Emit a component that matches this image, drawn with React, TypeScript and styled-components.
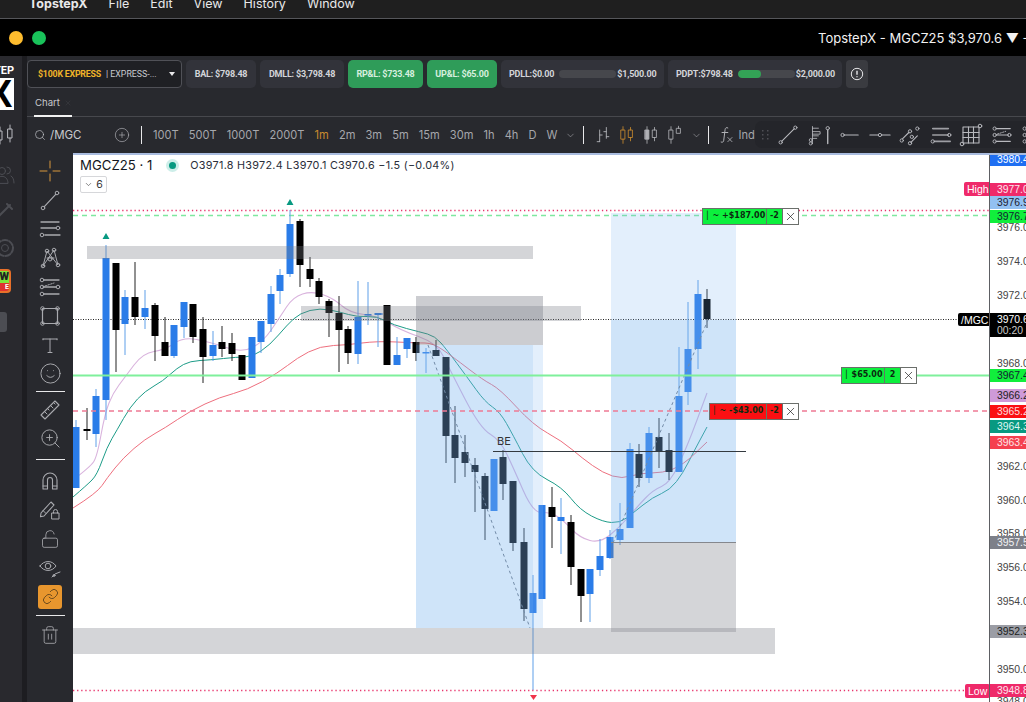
import React from "react";
import styled, { createGlobalStyle } from "styled-components";
import { Search, CirclePlus, LockOpen, Link, Trash2, Smile, ZoomIn, ChevronDown, X as CloseIcon } from "lucide-react";

const GlobalStyle = createGlobalStyle`
  html, body { margin: 0; padding: 0; background: #000; }
  * { box-sizing: border-box; }
  body { font-family: "Inter", "Liberation Sans", sans-serif; }
`;

const Page = styled.div`
  width: 1026px;
  height: 702px;
  display: flex;
  flex-direction: column;
  overflow: hidden;
  background: #28292e;
`;

const MenuBar = styled.div`
  height: 19px;
  flex-shrink: 0;
  display: flex;
  align-items: flex-end;
  gap: 21px;
  padding: 0 0 8px 29px;
  background: #1f1f1f;
  border-bottom: 1px solid #55565a;
  overflow: hidden;
`;

const MenuItem = styled.span<{ $bold?: boolean }>`
  font-size: 12.5px;
  line-height: 13px;
  color: #e9e9ea;
  font-weight: ${(p) => (p.$bold ? 700 : 400)};
`;

const TitleBar = styled.div`
  height: 37px;
  flex-shrink: 0;
  display: flex;
  align-items: center;
  padding-left: 9px;
  gap: 9px;
  background: #000;
`;

const WindowDot = styled.span<{ $color: string }>`
  width: 14px;
  height: 14px;
  flex-shrink: 0;
  border-radius: 50%;
  background: ${(p) => p.$color};
`;

const WindowTitle = styled.span`
  margin-left: 763px;
  flex-shrink: 0;
  white-space: nowrap;
  font-size: 13px;
  color: #f2f2f2;
`;

const Workspace = styled.div`
  flex: 1;
  display: flex;
  min-height: 0;
`;

const LogoRail = styled.div`
  width: 22px;
  flex-shrink: 0;
  display: flex;
  flex-direction: column;
  padding-top: 9px;
  background: #29292e;
  overflow: hidden;
`;

const LogoStep = styled.div`
  width: 14px;
  height: 12px;
  display: flex;
  justify-content: flex-end;
  font: 700 11px/12px "Roboto", sans-serif;
  color: #fff;
  white-space: nowrap;
`;

const LogoBox = styled.div`
  width: 14px;
  height: 32px;
  margin-top: 1px;
  background: #fff;
  overflow: hidden;
  font: 900 38px/32px "Liberation Sans", sans-serif;
  color: #000;
  text-indent: -13px;
`;

const RailIcon = styled.div<{ $gap: number }>`
  margin: ${(p) => p.$gap}px 0 0 -7px;
  width: 24px;
  height: 24px;
  color: #4c4d53;
`;

const LiveBadge = styled.div`
  margin-top: 9px;
  width: 11px;
  height: 24px;
  display: flex;
  flex-direction: column;
  justify-content: flex-end;
  align-items: flex-end;
  background: #7fe53b;
  border: 2px solid #e8702a;
  border-left: none;
  border-radius: 0 4px 4px 0;
  overflow: hidden;
  position: relative;
  font: 900 11px/12px "Roboto", sans-serif;
  color: #222;
`;

const LiveStrip = styled.span`
  display: block;
  width: 11px;
  height: 8px;
  background: #e0322e;
  font: 700 7px/8px "Roboto", sans-serif;
  color: #fff;
  text-align: right;
`;

const GrayStub = styled.div`
  margin-top: 19px;
  width: 7px;
  height: 20px;
  background: #4c4d53;
  border-radius: 0 3px 3px 0;
`;

const RailGutter = styled.div`
  width: 5px;
  flex-shrink: 0;
  background: #1d1d21;
`;

const Main = styled.div`
  flex: 1;
  min-width: 0;
  display: flex;
  flex-direction: column;
`;

const AccountBar = styled.div`
  height: 36px;
  flex-shrink: 0;
  display: flex;
  gap: 4px;
  padding: 4px 0 4px 0;
`;

const AccountSelect = styled.div`
  width: 155px;
  display: flex;
  align-items: center;
  padding-left: 10px;
  border: 1px solid #505157;
  border-radius: 4px;
  background: #1f2024;
  font: 700 8.8px "Roboto", sans-serif;
  letter-spacing: -0.2px;
  color: #f0b429;
  white-space: nowrap;
`;

const AccountSub = styled.span`
  margin-left: 5px;
  font-weight: 400;
  letter-spacing: 0;
  color: #c9cacf;
`;

const Caret = styled.span`
  margin-left: 12px;
  width: 0;
  height: 0;
  border-left: 3.5px solid transparent;
  border-right: 3.5px solid transparent;
  border-top: 4px solid #e8e8ea;
`;

const StatPill = styled.div<{ $width: number; $green?: boolean; $limit?: boolean }>`
  width: ${(p) => p.$width}px;
  display: flex;
  align-items: center;
  justify-content: ${(p) => (p.$limit ? "flex-start" : "center")};
  padding-left: ${(p) => (p.$limit ? 8 : 0)}px;
  gap: 5px;
  border-radius: 5px;
  background: ${(p) => (p.$green ? "#2f9c59" : "#32333a")};
  font: 700 9px "Roboto", sans-serif;
  letter-spacing: -0.2px;
  color: ${(p) => (p.$green ? "#d6efdf" : "#d4d5d9")};
  white-space: nowrap;
`;

const LimitTrack = styled.div`
  width: 57px;
  height: 8px;
  margin-right: -4px;
  flex-shrink: 0;
  border-radius: 4px;
  background: #46474c;
  overflow: hidden;
`;

const LimitFill = styled.div<{ $percent: number }>`
  width: ${(p) => p.$percent}%;
  height: 100%;
  border-radius: 4px;
  background: #33a356;
`;

const AlertButton = styled.div`
  width: 22px;
  display: flex;
  align-items: center;
  justify-content: center;
  border-radius: 4px;
  background: #3a3b40;
  color: #e6e6e8;
`;

const TabRow = styled.div`
  height: 25px;
  flex-shrink: 0;
  display: flex;
  padding-left: 7px;
  border-bottom: 1px solid #47484d;
`;

const ChartTab = styled.div`
  width: 38px;
  height: 25px;
  display: flex;
  align-items: center;
  padding: 0 0 2px 1px;
  gap: 4px;
  border-bottom: 2px solid #f2f2f2;
  font-size: 9.6px;
  color: #c8c9cd;
  white-space: nowrap;
  overflow: visible;
`;

const TabClose = styled.span`
  color: #4c4d53;
  display: flex;
`;

const ChartToolbar = styled.div`
  height: 36px;
  flex-shrink: 0;
  position: relative;
  display: flex;
  align-items: center;
  padding-left: 7px;
  font-size: 11.1px;
  color: #a6a7ac;
  white-space: nowrap;
`;

const SymbolSearch = styled.div`
  width: 80px;
  display: flex;
  align-items: center;
  gap: 4px;
  color: #c8c9cd;
  font-size: 11.5px;
`;

const Divider = styled.span<{ $left: number; $right: number }>`
  width: 1px;
  height: 18px;
  background: #e8e8ea;
  margin: 0 ${(p) => p.$right}px 0 ${(p) => p.$left}px;
  flex-shrink: 0;
`;

const Intervals = styled.div`
  display: flex;
  gap: 10.1px;
`;

const Interval = styled.span<{ $active?: boolean }>`
  color: ${(p) => (p.$active ? "#c98a2e" : "#a6a7ac")};
`;

const IconSlot = styled.span<{ $width: number; $color?: string }>`
  width: ${(p) => p.$width}px;
  display: flex;
  justify-content: center;
  align-items: center;
  color: ${(p) => p.$color || "#b0b1b6"};
  flex-shrink: 0;
`;

const DrawingPanel = styled.div`
  position: absolute;
  top: 4px;
  right: 0;
  width: 271px;
  height: 27px;
  display: flex;
  align-items: center;
  padding-left: 2px;
  overflow: hidden;
  background: #24252a;
  border-radius: 7px 0 0 7px;
`;

const PanelTool = styled.span`
  width: 30.5px;
  flex-shrink: 0;
  display: flex;
  justify-content: center;
  color: #b8b9be;
`;

const ChartArea = styled.div`
  flex: 1;
  min-height: 0;
  display: flex;
`;

const ToolRail = styled.div`
  width: 46px;
  flex-shrink: 0;
  display: flex;
  flex-direction: column;
  align-items: center;
  padding-top: 3px;
`;

const ToolSlot = styled.div<{ $active?: boolean }>`
  width: 24px;
  height: ${(p) => (p.$active ? 24 : 29)}px;
  margin: ${(p) => (p.$active ? "2.5px 0" : "0")};
  display: flex;
  align-items: center;
  justify-content: center;
  border-radius: 3px;
  background: ${(p) => (p.$active ? "#e8962e" : "transparent")};
  color: ${(p) => (p.$active ? "#3a2c16" : "#a9aaaf")};
`;

const RailRule = styled.div<{ $space: number }>`
  width: 29px;
  height: 1px;
  margin: ${(p) => p.$space}px 0;
  background: #e8e8ea;
`;

const Chart = styled.div`
  flex: 1;
  min-width: 0;
  display: flex;
  background: #fff;
  border-top: 2px solid #a9bcdf;
`;

const Canvas = styled.div`
  position: relative;
  width: 916px;
  flex-shrink: 0;
  overflow: visible;
`;

const CandleSvg = styled.svg`
  display: block;
  width: 916px;
  height: 547px;
`;

const Legend = styled.div`
  position: absolute;
  left: 7px;
  top: 2px;
  display: flex;
  align-items: center;
  color: #131722;
`;

const LegendTitle = styled.span`
  font-size: 13.2px;
  line-height: 16px;
`;

const StatusDot = styled.span`
  width: 13px;
  height: 13px;
  margin: 0 11px 0 14px;
  border-radius: 50%;
  background: #cdeee9;
  display: flex;
  align-items: center;
  justify-content: center;
  &::after {
    content: "";
    width: 7px;
    height: 7px;
    border-radius: 50%;
    background: #089981;
  }
`;

const LegendValues = styled.span`
  font-size: 10.8px;
  letter-spacing: 0.28px;
  white-space: nowrap;
  color: #2a2e39;
`;

const CollapseButton = styled.div`
  position: absolute;
  left: 7px;
  top: 21px;
  width: 27px;
  height: 17px;
  display: flex;
  align-items: center;
  justify-content: center;
  gap: 3px;
  border: 1px solid #d6d7da;
  border-radius: 2px;
  font-size: 10.5px;
  color: #333;
`;

const ChartNote = styled.span`
  position: absolute;
  left: 424px;
  top: 279px;
  font-size: 11px;
  color: #333;
`;

const OrderTag = styled.div<{ $x: number; $y: number; $width: number; $bg: string }>`
  position: absolute;
  left: ${(p) => p.$x}px;
  top: ${(p) => p.$y}px;
  width: ${(p) => p.$width}px;
  height: 17px;
  display: flex;
  align-items: stretch;
  background: ${(p) => p.$bg};
  border: 1.5px solid #6b6f6b;
  font: 700 8px/14px "DejaVu Sans", sans-serif;
  color: #0b2b10;
  white-space: nowrap;
`;

const TagAmount = styled.span`
  flex: 1;
  padding-left: 2px;
`;

const TagQty = styled.span`
  width: 16px;
  text-align: center;
  border-left: 1px solid #5f7a62;
`;

const TagClose = styled.span`
  width: 16px;
  display: flex;
  align-items: center;
  justify-content: center;
  background: #fff;
  color: #222;
  border-left: 1px solid #6b6f6b;
`;

const SideTag = styled.span<{ $y: number; $bg: string; $x: number; $h?: number }>`
  position: absolute;
  left: ${(p) => p.$x}px;
  top: ${(p) => p.$y}px;
  height: ${(p) => p.$h || 13}px;
  padding: 0 3px;
  display: flex;
  align-items: center;
  border-radius: 2px;
  background: ${(p) => p.$bg};
  font: 10.5px "Liberation Sans", sans-serif;
  color: #fff;
`;

const PriceAxis = styled.div`
  position: relative;
  flex: 1;
  border-left: 1px solid #5d5f63;
  background: #fff;
  overflow: hidden;
`;

const PriceLabel = styled.div<{ $y: number; $bg?: string; $fg?: string; $h?: number }>`
  position: absolute;
  left: 0;
  right: 0;
  top: ${(p) => p.$y}px;
  height: ${(p) => p.$h || 13}px;
  padding-left: 7px;
  background: ${(p) => p.$bg || "transparent"};
  color: ${(p) => p.$fg || "#444"};
  font: 10.4px/${(p) => p.$h || 13}px "Liberation Sans", sans-serif;
  white-space: nowrap;
`;

// x, body top, body bottom, wick top, wick bottom, colour
type Candle = [number, number, number, number, number, "b" | "k"];

const candles: Candle[] = [
  [76, 427, 488, 420, 488, "b"], [87, 429, 431, 408, 440, "k"], [96, 396, 434, 389, 447, "b"],
  [106, 258, 400, 245, 420, "b"], [116, 263, 330, 263, 372, "k"], [125, 297, 324, 290, 355, "b"],
  [135, 297, 317, 262, 325, "k"], [145, 308, 317, 290, 329, "b"], [155, 305, 336, 303, 361, "k"],
  [165, 342, 356, 317, 356, "k"], [174, 325, 356, 325, 358, "b"], [184, 302, 327, 302, 338, "b"],
  [193, 304, 337, 304, 343, "k"], [203, 329, 357, 317, 383, "k"], [213, 345, 356, 331, 361, "b"],
  [222, 342, 349, 326, 357, "k"], [232, 343, 354, 333, 361, "k"], [242, 355, 380, 355, 380, "k"],
  [252, 337, 378, 337, 378, "b"], [261, 321, 342, 321, 353, "b"], [271, 294, 324, 286, 332, "b"],
  [280, 275, 291, 269, 304, "b"], [290, 224, 274, 210, 277, "b"], [300, 221, 265, 219, 287, "k"],
  [310, 269, 279, 257, 287, "k"], [319, 281, 297, 278, 304, "k"], [329, 301, 313, 299, 337, "k"],
  [339, 313, 330, 296, 372, "k"], [348, 329, 353, 326, 364, "k"], [358, 317, 354, 281, 364, "b"],
  [368, 314, 315, 282, 325, "b"], [378, 313, 315, 313, 347, "b"], [387, 305, 365, 305, 365, "k"],
  [397, 355, 365, 337, 365, "b"], [407, 338, 349, 338, 358, "b"], [416, 342, 353, 337, 361, "k"],
  [426, 352, 353, 348, 373, "b"], [436, 350, 356, 340, 356, "k"], [446, 357, 436, 357, 463, "k"],
  [455, 435, 458, 406, 483, "k"], [465, 452, 463, 435, 477, "k"], [475, 465, 472, 458, 512, "k"],
  [485, 476, 509, 473, 540, "k"], [494, 459, 511, 459, 511, "b"], [503, 457, 484, 450, 500, "k"],
  [513, 481, 543, 481, 551, "k"], [524, 542, 609, 528, 621, "k"], [533, 593, 613, 575, 690, "b"],
  [542, 505, 599, 505, 599, "b"], [552, 507, 517, 487, 548, "k"], [561, 517, 521, 498, 554, "b"],
  [571, 522, 567, 515, 585, "k"], [581, 569, 596, 569, 622, "k"], [590, 569, 594, 569, 622, "b"],
  [600, 556, 570, 539, 576, "b"], [610, 537, 558, 530, 559, "b"], [620, 529, 540, 503, 545, "b"],
  [630, 449, 528, 443, 528, "b"], [639, 454, 478, 444, 487, "k"], [649, 433, 478, 427, 483, "b"],
  [659, 437, 451, 418, 468, "k"], [669, 450, 472, 433, 480, "k"], [679, 396, 472, 347, 472, "b"],
  [688, 349, 392, 302, 405, "b"], [698, 294, 349, 280, 369, "b"], [707, 299, 319, 289, 328, "k"],
];

type Point = [number, number];

const tealLine: Point[] = [[73, 497], [87, 485], [97, 475], [107, 447], [117, 430], [130, 407], [145, 391], [163, 381], [177, 368], [190, 361], [210, 360], [237, 357], [252, 357], [270, 345], [287, 325], [300, 313], [320, 308], [340, 312], [357, 317], [377, 316], [393, 325], [420, 332], [435, 336], [447, 350], [467, 377], [485, 402], [500, 412], [513, 435], [532, 472], [562, 487], [580, 510], [603, 522], [620, 523], [633, 513], [653, 497], [670, 490], [683, 473], [693, 453], [707, 427]];
const redLine: Point[] = [[73, 508], [97, 493], [107, 478], [123, 458], [145, 439], [165, 428], [190, 411], [220, 397], [247, 390], [278, 373], [297, 358], [320, 346], [347, 345], [377, 341], [417, 343], [433, 343], [453, 357], [483, 380], [500, 389], [533, 425], [562, 441], [582, 458], [603, 473], [622, 479], [640, 473], [663, 473], [683, 465], [707, 442]];
const purpleLine: Point[] = [[73, 480], [90, 467], [97, 457], [105, 413], [113, 393], [125, 377], [143, 353], [165, 350], [183, 337], [210, 342], [242, 353], [263, 342], [280, 317], [293, 297], [312, 291], [333, 298], [350, 313], [378, 316], [400, 330], [437, 343], [450, 370], [480, 428], [500, 440], [513, 467], [533, 513], [550, 512], [563, 520], [580, 538], [600, 543], [620, 527], [637, 507], [653, 490], [670, 483], [687, 447], [707, 393]];

// round the corners of a moving average a little
const smoothPath = (points: Point[]) => {
  let d = `M${points[0][0]} ${points[0][1]}`;
  for (let i = 1; i < points.length - 1; i++) {
    const [x, y] = points[i];
    const [nx, ny] = points[i + 1];
    d += `Q${x} ${y} ${(x + nx) / 2} ${(y + ny) / 2}`;
  }
  const last = points[points.length - 1];
  return `${d}L${last[0]} ${last[1]}`;
};

const axisLabels: { y: number; text: string; bg?: string; fg?: string }[] = [
  { y: -2, text: "3980.4", bg: "#1f6ff2", fg: "#fff" },
  { y: 66, text: "3976.0" }, { y: 99.5, text: "3974.0" }, { y: 134, text: "3972.0" },
  { y: 202, text: "3968.0" }, { y: 304.5, text: "3962.0" }, { y: 338.5, text: "3960.0" },
  { y: 371.5, text: "3958.0" }, { y: 405.5, text: "3956.0" }, { y: 440, text: "3954.0" },
  { y: 507.5, text: "3950.0" }, { y: 540, text: "3948.0" },
  { y: 27.5, text: "3977.0", bg: "#ef2a6a", fg: "#fde3ec" },
  { y: 41, text: "3976.9", bg: "#92c0f2", fg: "#223" },
  { y: 54.5, text: "3976.7", bg: "#11ee3c", fg: "#123" },
  { y: 213.5, text: "3967.4", bg: "#11ee3c", fg: "#123" },
  { y: 234, text: "3966.2", bg: "#cf9ad8", fg: "#222" },
  { y: 249.5, text: "3965.2", bg: "#fb0f12", fg: "#fbdcdc" },
  { y: 265, text: "3964.3", bg: "#089981", fg: "#dff5f1" },
  { y: 280.5, text: "3963.4", bg: "#f5404f", fg: "#fde3e5" },
  { y: 381, text: "3957.5", bg: "#7d8089", fg: "#f2f2f4" },
  { y: 470, text: "3952.3", bg: "#9b9da5", fg: "#1c1d20" },
  { y: 529, text: "3948.8", bg: "#ef2a6a", fg: "#fde3ec" },
];

const intervals = ["100T", "500T", "1000T", "2000T", "1m", "2m", "3m", "5m", "15m", "30m", "1h", "4h", "D", "W"];

const Dot = ({ x, y, r = 1.8 }: { x: number; y: number; r?: number }) => (
  <circle cx={x} cy={y} r={r} fill="none" stroke="currentColor" />
);

const Icon = ({ size = 24, w = 24, children }: { size?: number; w?: number; children: React.ReactNode }) => (
  <svg width={size * (w / 24)} height={size} viewBox={`0 0 ${w} 24`} fill="none" stroke="currentColor" strokeWidth="1" strokeLinecap="round" strokeLinejoin="round">
    {children}
  </svg>
);

const CrosshairIcon = () => (
  <Icon><path d="M12 2v7M12 15v7M2 12h7M15 12h7" stroke="#d8983c" /></Icon>
);
const TrendIcon = () => (
  <Icon><Dot x={5} y={20} /><Dot x={19} y={5} /><path d="M6.3 18.7 17.7 6.3" strokeWidth="1.2" /></Icon>
);
const ChannelIcon = () => (
  <Icon><path d="M3 5h18M3 11h15M7 18h15" strokeWidth="1.3" /><Dot x={20} y={11} /><Dot x={4} y={18} /></Icon>
);
const PatternIcon = () => (
  <Icon>
    <path d="M5 20 9 5 20 19 16 4 5 20M9 12h7" />
    <Dot x={5} y={20} /><Dot x={9} y={5} /><Dot x={20} y={19} /><Dot x={16} y={4} /><Dot x={12} y={13} r={2} />
  </Icon>
);
const FibIcon = () => (
  <Icon>
    <path d="M6 5h15M5 12h13M6 19h15" strokeWidth="1.3" /><path d="M7 11l9-3" strokeDasharray="1.5 1.5" />
    <Dot x={4} y={5} /><Dot x={4} y={12} /><Dot x={20} y={12} /><Dot x={4} y={19} />
  </Icon>
);
const RectIcon = () => (
  <Icon><rect x="4.5" y="4.5" width="15" height="15" strokeWidth="1.2" /><Dot x={4.5} y={4.5} /><Dot x={19.5} y={4.5} /><Dot x={4.5} y={19.5} /><Dot x={19.5} y={19.5} /></Icon>
);
const TextIcon = () => (
  <Icon><path d="M5 6h14M12 6v13M10 19.5h4" /><path d="M5 6v.8M19 6v.8" /></Icon>
);
const RulerIcon = () => (
  <Icon>
    <path d="M3 17 17 3l4 4L7 21z" strokeWidth="1.1" />
    <path d="M6.5 13.5 9 16M9.5 10.5l1.6 1.6M12.5 7.5 15 10M15.5 4.5l1.6 1.6" />
  </Icon>
);
const MagnetIcon = () => (
  <Icon>
    <path d="M5 20V11a7 7 0 0 1 14 0v9h-4.500v-9a2.500 2.500 0 0 0-5 0v9z" strokeWidth="1.100" />
    <path d="M5 17h4.500M14.500 17H19" />
  </Icon>
);
const PencilLockIcon = () => (
  <Icon>
    <path d="M3 15 13 4l3 3L6 18l-3.5.8z" strokeWidth="1.1" />
    <path d="M5 12.5 8 15.500" />
    <rect x="14" y="15" width="7" height="6" /><path d="M15.500 15v-1.500a2 2 0 0 1 4 0V15" />
  </Icon>
);
const EyeBrushIcon = () => (
  <Icon>
    <path d="M2 10c4-6 12-6 16 0-4 6-12 6-16 0z" /><circle cx="10" cy="10" r="2.800" />
    <path d="M14 21l3-3 5-2" /><Dot x={16} y={19.500} r={1} />
  </Icon>
);

const BarsIcon = () => (
  <Icon size={20}><path d="M8 6v14M5 20h3M8 12h3M16 3v13M13 8h3M16 14h3" strokeWidth="1.100" /></Icon>
);
const CandleIcon = ({ filled, hollow }: { filled?: boolean; hollow?: boolean }) => (
  <Icon size={20}>
    <rect x="5" y="6" width="4.500" height="11" fill={filled ? "currentColor" : "none"} />
    <path d="M7.200 2v4M7.200 17v5" />
    <rect x="14" y={hollow ? 4 : 6} width="4.500" height={hollow ? 6 : 9} />
    <path d={hollow ? "M16.200 1.500V4" : "M16.200 3v3M16.200 15v4"} />
  </Icon>
);
const FxIcon = () => (
  <Icon size={20}>
    <path d="M13 3.500c-2-1-3 0-3.300 2L8 19c-.3 1.500-1.500 2-3 1.500M6 9h7" strokeWidth="1.200" />
    <path d="M13 15l5 5M18 15l-5 5" />
  </Icon>
);

const PanelGrip = () => (
  <svg width="14" height="14" viewBox="0 0 14 14" fill="#4e4f55">
    {[2, 6, 10].map((y) => [4, 9].map((x) => <rect key={`${x}-${y}`} x={x} y={y} width="1.500" height="1.500" />))}
  </svg>
);

const panelTools = [
  <Icon size={22} key="line"><Dot x={4} y={20} /><Dot x={20} y={4} /><path d="M5.300 18.700 18.700 5.300" strokeWidth="1.200" /></Icon>,
  <Icon size={22} w={36} key="flag">
    <path d="M10 2v20M10 4h7M10 8h9v3h-9M10 13h7M10 16h5" /><Dot x={8} y={18} /><Dot x={8} y={22} />
    <Dot x={28} y={4} r={2} /><path d="M28 6v16" strokeWidth="1.600" />
  </Icon>,
  <Icon size={22} key="hray"><Dot x={5} y={12} /><path d="M7 12h15" strokeWidth="1.300" /></Icon>,
  <Icon size={22} key="hline"><Dot x={12} y={12} /><path d="M1 12h9M14 12h9" strokeWidth="1.300" /></Icon>,
  <Icon size={22} key="parallel">
    <path d="M4 16 11 9M13 20l7-7" strokeWidth="1.200" /><Dot x={3} y={18} /><Dot x={12} y={8} /><Dot x={12} y={21} /><Dot x={20} y={5} /><Dot x={14} y={14} />
  </Icon>,
  <Icon size={22} key="lines">
    <path d="M3 5h17M3 12h17M5 19h17" strokeWidth="1.800" stroke="#9d9ea3" /><Dot x={21} y={12} /><Dot x={3} y={19} />
  </Icon>,
  <Icon size={24} key="grid">
    <rect x="4" y="4" width="16" height="16" strokeWidth="1.100" /><path d="M4 9.500h16M4 14.500h16M9.500 4v16M14.500 4v16" strokeWidth="1.100" />
    <Dot x={21} y={3} /><Dot x={3} y={21} />
  </Icon>,
  <Icon size={22} key="fib">
    <path d="M6 5h15M6 12h13M6 19h15" strokeWidth="1.300" /><path d="M7 11l9-3" strokeDasharray="1.500 1.500" />
    <Dot x={4} y={5} /><Dot x={4} y={12} /><Dot x={20} y={12} /><Dot x={4} y={19} />
  </Icon>,
  <Icon size={22} key="more">
    <path d="M6 5h15M6 12h13M6 19h15" strokeWidth="1.300" /><Dot x={4} y={5} /><Dot x={4} y={12} /><Dot x={4} y={19} />
  </Icon>,
];

const toolGroups: React.ReactNode[] = [
  <CrosshairIcon />, <TrendIcon />, <ChannelIcon />, <PatternIcon />, <FibIcon />, <RectIcon />, <TextIcon />, <Smile size={23} strokeWidth={1} />,
];

const ChartDrawing = () => (
  <CandleSvg viewBox="73 155 916 547">
    <path d="M73 210.500H989" stroke="#e8336b" strokeWidth="1.300" strokeDasharray="1.300 2.800" />
    <path d="M73 215.500H989" stroke="#7fe8a0" strokeWidth="1.500" strokeDasharray="5 4" />
    <path d="M73 319.500H958" stroke="#222" strokeWidth="1" strokeDasharray="1 1.500" />

    <path d={smoothPath(purpleLine)} fill="none" stroke="#d9b3dd" strokeWidth="1.100" />
    <path d={smoothPath(tealLine)} fill="none" stroke="#1d9c88" strokeWidth="1" />
    <path d={smoothPath(redLine)} fill="none" stroke="#ee6f7e" strokeWidth="1" />

    {candles.map(([x, top, bottom, wTop, wBottom, color]) => {
      const fill = color === "b" ? "#2a7ce8" : "#000";
      return (
        <g key={x}>
          <path d={`M${x} ${wTop}V${wBottom}`} stroke={color === "b" ? "#5f9fe8" : "#222"} strokeWidth="1" />
          <rect x={x - 3.500} y={top} width="7" height={Math.max(bottom - top, 1.500)} fill={fill} />
        </g>
      );
    })}

    <path d="M428 345 530 628" stroke="#6f7680" strokeWidth="1" strokeDasharray="3 3" />
    <path d="M613 543 708 320" stroke="#6f7680" strokeWidth="1" strokeDasharray="3 3" />
    <path d="M375 314h8" stroke="#2a7ce8" strokeWidth="1" />

    <rect x="87" y="246" width="446" height="13" fill="#787b86" fillOpacity=".32" />
    <rect x="301" y="306" width="280" height="15" fill="#787b86" fillOpacity=".32" />
    <rect x="416" y="296" width="127" height="49" fill="#787b86" fillOpacity=".38" />
    <rect x="73" y="628" width="702" height="26" fill="#787b86" fillOpacity=".32" />

    <rect x="416" y="345" width="127" height="283" fill="#7cb2f0" fillOpacity=".21" />
    <rect x="416" y="345" width="117" height="283" fill="#7cb2f0" fillOpacity=".19" />
    <rect x="611" y="213" width="125" height="329" fill="#7cb2f0" fillOpacity=".21" />
    <rect x="611" y="320" width="125" height="222" fill="#7cb2f0" fillOpacity=".19" />
    <rect x="611" y="542" width="125" height="90" fill="#787b86" fillOpacity=".32" />
    <path d="M611 542.500h125" stroke="#85878d" strokeWidth="1" />

    <path d="M73 375.500H989" stroke="#7ff09b" strokeWidth="2" />
    <path d="M73 411H989" stroke="#ee7a94" strokeWidth="1.400" strokeDasharray="5 4" />
    <path d="M493 451.500h253" stroke="#333a40" strokeWidth="1.200" />
    <path d="M73 690.500H965" stroke="#e8336b" strokeWidth="1.300" strokeDasharray="1.300 2.800" />

    <path d="M106 233l3.500 6h-7zM290 199l3.500 6h-7z" fill="#089981" />
    <path d="M530 695h7l-3.500 5z" fill="#f0344a" />
  </CandleSvg>
);

const Tag = ({ x, y, width, bg, amount, qty }: { x: number; y: number; width: number; bg: string; amount: string; qty: string }) => (
  <OrderTag $x={x} $y={y} $width={width} $bg={bg}>
    <TagAmount>{amount}</TagAmount>
    <TagQty>{qty}</TagQty>
    <TagClose><CloseIcon size={13} strokeWidth={1.300} /></TagClose>
  </OrderTag>
);

export default function App() {
  return (
    <Page>
      <GlobalStyle />
      <MenuBar>
        <MenuItem $bold>TopstepX</MenuItem>
        <MenuItem>File</MenuItem>
        <MenuItem>Edit</MenuItem>
        <MenuItem>View</MenuItem>
        <MenuItem>History</MenuItem>
        <MenuItem>Window</MenuItem>
      </MenuBar>
      <TitleBar>
        <WindowDot $color="#febc2e" />
        <WindowDot $color="#19c25a" />
        <WindowTitle>TopstepX - MGCZ25 $3,970.6 ▼ -0.7</WindowTitle>
      </TitleBar>
      <Workspace>
        <LogoRail>
          <LogoStep>STEP</LogoStep>
          <LogoBox>X</LogoBox>
          <RailIcon $gap={13}>
            <Icon><rect x="5" y="8" width="4" height="9" stroke="#b9babf" /><path d="M7 4v4M7 17v4" stroke="#b9babf" /><rect x="15" y="6" width="4" height="9" stroke="#b9babf" /><path d="M17 2v4M17 15v4" stroke="#b9babf" /></Icon>
          </RailIcon>
          <RailIcon $gap={16}>
            <Icon><circle cx="9" cy="8" r="3.500" /><path d="M3 20c0-9 12-9 12 0zM14 4a3.500 3.500 0 0 1 0 7M18 13c2 1 3 4 3 7" /></Icon>
          </RailIcon>
          <RailIcon $gap={12}>
            <Icon><path d="M3 20 17 6M14 5l5 5" strokeWidth="2" /></Icon>
          </RailIcon>
          <RailIcon $gap={13}>
            <Icon><circle cx="12" cy="12" r="3.500" /><circle cx="12" cy="12" r="8" strokeDasharray="5 2" strokeWidth="2" /></Icon>
          </RailIcon>
          <LiveBadge>
            W
            <LiveStrip>E</LiveStrip>
          </LiveBadge>
          <GrayStub />
        </LogoRail>
        <RailGutter />
        <Main>
          <AccountBar>
            <AccountSelect>
              $100K EXPRESS
              <AccountSub>| EXPRESS-...</AccountSub>
              <Caret />
            </AccountSelect>
            <StatPill $width={70}>BAL: $798.48</StatPill>
            <StatPill $width={84}>DMLL: $3,798.48</StatPill>
            <StatPill $width={75} $green>RP&amp;L: $733.48</StatPill>
            <StatPill $width={70} $green>UP&amp;L: $65.00</StatPill>
            <StatPill $width={163} $limit>
              PDLL:$0.00
              <LimitTrack><LimitFill $percent={0} /></LimitTrack>
              $1,500.00
            </StatPill>
            <StatPill $width={174} $limit>
              PDPT:$798.48
              <LimitTrack><LimitFill $percent={40} /></LimitTrack>
              $2,000.00
            </StatPill>
            <AlertButton>
              <svg width="14" height="14" viewBox="0 0 14 14" fill="none" stroke="currentColor">
                <circle cx="7" cy="7" r="5.700" />
                <path d="M7 3.800v4M7 9.300v1" strokeWidth="1.400" />
              </svg>
            </AlertButton>
          </AccountBar>
          <TabRow>
            <ChartTab>
              Chart
              <TabClose><CloseIcon size={8} strokeWidth={1} /></TabClose>
            </ChartTab>
          </TabRow>
          <ChartToolbar>
            <SymbolSearch>
              <Search size={12} strokeWidth={1.300} />
              /MGC
            </SymbolSearch>
            <IconSlot $width={16}><CirclePlus size={16} strokeWidth={1} /></IconSlot>
            <Divider $left={11} $right={11} />
            <Intervals>
              {intervals.map((item) => (
                <Interval key={item} $active={item === "1m"}>{item}</Interval>
              ))}
            </Intervals>
            <IconSlot $width={25}><ChevronDown size={11} strokeWidth={1.200} /></IconSlot>
            <Divider $left={0} $right={7} />
            <IconSlot $width={24}><BarsIcon /></IconSlot>
            <IconSlot $width={24} $color="#c98a2e"><CandleIcon /></IconSlot>
            <IconSlot $width={24}><CandleIcon filled /></IconSlot>
            <IconSlot $width={24}><CandleIcon hollow /></IconSlot>
            <IconSlot $width={20}><ChevronDown size={11} strokeWidth={1.200} /></IconSlot>
            <Divider $left={1} $right={6} />
            <IconSlot $width={24}><FxIcon /></IconSlot>
            <span>Ind</span>
            <DrawingPanel>
              <IconSlot $width={16}><PanelGrip /></IconSlot>
              {panelTools.map((tool, i) => (
                <PanelTool key={i}>{tool}</PanelTool>
              ))}
            </DrawingPanel>
          </ChartToolbar>
          <ChartArea>
            <ToolRail>
              {toolGroups.map((tool, i) => (
                <ToolSlot key={i}>{tool}</ToolSlot>
              ))}
              <RailRule $space={3} />
              <ToolSlot><RulerIcon /></ToolSlot>
              <ToolSlot><ZoomIn size={23} strokeWidth={1} /></ToolSlot>
              <RailRule $space={6} />
              <ToolSlot><MagnetIcon /></ToolSlot>
              <ToolSlot><PencilLockIcon /></ToolSlot>
              <ToolSlot><LockOpen size={20} strokeWidth={1} /></ToolSlot>
              <ToolSlot><EyeBrushIcon /></ToolSlot>
              <ToolSlot $active><Link size={17} strokeWidth={1} /></ToolSlot>
              <RailRule $space={4} />
              <ToolSlot><Trash2 size={20} strokeWidth={1} /></ToolSlot>
            </ToolRail>
            <Chart>
              <Canvas>
                <ChartDrawing />
                <Legend>
                  <LegendTitle>MGCZ25 · 1</LegendTitle>
                  <StatusDot />
                  <LegendValues>O3971.8 H3972.4 L3970.1 C3970.6 −1.5 (−0.04%)</LegendValues>
                </Legend>
                <CollapseButton><ChevronDown size={9} strokeWidth={1.500} />6</CollapseButton>
                <ChartNote>BE</ChartNote>
                <Tag x={629} y={53} width={97} bg="#0cf03d" amount="│ ~ +$187.00" qty="-2" />
                <Tag x={768} y={212} width={76} bg="#0cf03d" amount="│ $65.00" qty="2" />
                <Tag x={636} y={248} width={90} bg="#fb0f12" amount="│ ~ -$43.00" qty="-2" />
                <SideTag $x={891} $y={27} $bg="#ef2a6a" $h={14}>High</SideTag>
                <SideTag $x={885} $y={158} $bg="#000" $h={13}>/MGC</SideTag>
                <SideTag $x={892} $y={529} $bg="#ef2a6a" $h={14}>Low</SideTag>
              </Canvas>
              <PriceAxis>
                {axisLabels.map((label) => (
                  <PriceLabel key={label.text} $y={label.y} $bg={label.bg} $fg={label.fg}>
                    {label.text}
                  </PriceLabel>
                ))}
                <PriceLabel $y={157.500} $bg="#000" $fg="#fff">3970.6</PriceLabel>
                <PriceLabel $y={170} $bg="#000" $fg="#c9c9c9" $h={12}>00:20</PriceLabel>
              </PriceAxis>
            </Chart>
          </ChartArea>
        </Main>
      </Workspace>
    </Page>
  );
}
